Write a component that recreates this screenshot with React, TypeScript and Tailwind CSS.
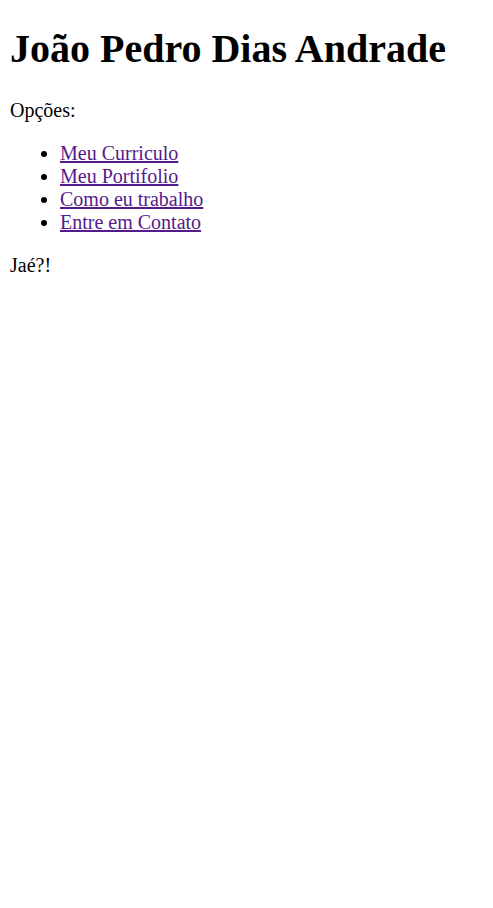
export default function App() {
  const links = ["Meu Curriculo", "Meu Portifolio", "Como eu trabalho", "Entre em Contato"];
  return (
    <div className="min-h-[908px] bg-white px-[10px] pt-[26px] text-black text-[20px] leading-[23px]" style={{ fontFamily: '"Liberation Serif", "Times New Roman", serif' }}>
      <h1 className="text-[40px] font-bold leading-[46px]">João Pedro Dias Andrade</h1>
      <p className="mt-[27px]">Opções:</p>
      <ul className="mt-[20px] list-disc pl-[50px]">
        {links.map((l) => (
          <li key={l}>
            <a href="#" className="text-[#551A8B] underline">{l}</a>
          </li>
        ))}
      </ul>
      <p className="mt-[20px]">Jaé?!</p>
    </div>
  );
}
